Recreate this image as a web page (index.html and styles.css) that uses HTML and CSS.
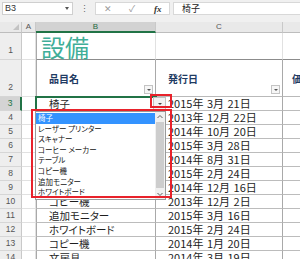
FILE: index.html
```html
<!DOCTYPE html>
<html lang="ja">
<head>
  <meta charset="UTF-8" />
  <title>設備</title>
  <link rel="stylesheet" href="styles.css">
</head>
<body>

  <div class="formula-bar">
    <div class="name-box">B3<span class="caret"></span></div>
    <div class="grip">⋮</div>
    <div class="fx-tools">
      <span class="tool">✕</span>
      <span class="tool">✓</span>
      <span class="fx">fx</span>
    </div>
    <div class="formula">椅子</div>
  </div>

  <div class="sheet">
    <div class="corner"><span class="tri"></span></div>
    <div class="col-h">A</div>
    <div class="col-h sel">B</div>
    <div class="col-h">C</div>
    <div class="col-h"></div>

    <div class="row-h r1">1</div>
    <div class="cell"></div>
    <div class="cell title">設備</div>
    <div class="cell"></div>
    <div class="cell"></div>

    <div class="row-h r2">2</div>
    <div class="cell"></div>
    <div class="cell th">品目名<span class="filter"></span></div>
    <div class="cell th">発行日<span class="filter"></span></div>
    <div class="cell th last">価</div>

    <div class="row-h sel">3</div>
    <div class="cell"></div>
    <div class="cell td active">椅子</div>
    <div class="cell td date">2015年 3月 21日</div>
    <div class="cell td last"></div>

    <!-- rows 4-9: item names sit under the open list -->
    <div class="row-h">4</div>
    <div class="cell"></div>
    <div class="cell td"></div>
    <div class="cell td date">2013年 12月 22日</div>
    <div class="cell td last"></div>

    <div class="row-h">5</div>
    <div class="cell"></div>
    <div class="cell td"></div>
    <div class="cell td date">2014年 10月 20日</div>
    <div class="cell td last"></div>

    <div class="row-h">6</div>
    <div class="cell"></div>
    <div class="cell td"></div>
    <div class="cell td date">2015年 3月 28日</div>
    <div class="cell td last"></div>

    <div class="row-h">7</div>
    <div class="cell"></div>
    <div class="cell td"></div>
    <div class="cell td date">2014年 8月 31日</div>
    <div class="cell td last"></div>

    <div class="row-h">8</div>
    <div class="cell"></div>
    <div class="cell td"></div>
    <div class="cell td date">2015年 2月 24日</div>
    <div class="cell td last"></div>

    <div class="row-h">9</div>
    <div class="cell"></div>
    <div class="cell td"></div>
    <div class="cell td date">2014年 12月 16日</div>
    <div class="cell td last"></div>

    <div class="row-h">10</div>
    <div class="cell"></div>
    <div class="cell td">コピー機</div>
    <div class="cell td date">2013年 12月 2日</div>
    <div class="cell td last"></div>

    <div class="row-h">11</div>
    <div class="cell"></div>
    <div class="cell td">追加モニター</div>
    <div class="cell td date">2015年 3月 16日</div>
    <div class="cell td last"></div>

    <div class="row-h">12</div>
    <div class="cell"></div>
    <div class="cell td">ホワイトボード</div>
    <div class="cell td date">2015年 2月 24日</div>
    <div class="cell td last"></div>

    <div class="row-h">13</div>
    <div class="cell"></div>
    <div class="cell td">コピー機</div>
    <div class="cell td date">2014年 1月 20日</div>
    <div class="cell td last"></div>

    <div class="row-h">14</div>
    <div class="cell"></div>
    <div class="cell td">文房具</div>
    <div class="cell td date">2014年 3月 19日</div>
    <div class="cell td last"></div>

    <!-- validation dropdown -->
    <span class="dv-btn"></span>
    <div class="dv-list">
      <ul>
        <li class="on">椅子</li>
        <li>レーザー プリンター</li>
        <li>スキャナー</li>
        <li>コーヒー メーカー</li>
        <li>テーブル</li>
        <li>コピー機</li>
        <li>追加モニター</li>
        <li>ホワイトボード</li>
      </ul>
      <div class="scroll">
        <svg class="arrow" width="10" height="8" viewBox="0 0 10 8"><polyline points="2.5,5.5 5,3 7.5,5.5" fill="none" stroke="#606060" stroke-width="1"/></svg>
        <div class="thumb"></div>
        <svg class="arrow" width="10" height="8" viewBox="0 0 10 8"><polyline points="2.5,2.5 5,5 7.5,2.5" fill="none" stroke="#606060" stroke-width="1"/></svg>
      </div>
    </div>

    <!-- annotation boxes -->
    <div class="mark mark-btn"></div>
    <div class="mark mark-list"></div>
  </div>

</body>
</html>
```

FILE: styles.css
```css
body {
  margin: 0;
  width: 300px;
  height: 259px;
  overflow: hidden;
  background-color: #f0f0f0;
  font-family: "Noto Sans CJK JP", "Noto Sans", sans-serif;
  font-feature-settings: "palt";
  color: #222;
}

/* formula bar */
.formula-bar {
  display: flex;
  align-items: center;
  height: 17px;
  padding: 0 0 0 2px;
  margin-bottom: 5px;
}

.name-box {
  position: relative;
  width: 71px;
  height: 13px;
  box-sizing: border-box;
  background-color: #fff;
  border: 1px solid #cfcfcf;
  font-family: "Liberation Sans", sans-serif;
  font-size: 9px;
  line-height: 11px;
  padding-left: 2px;
  color: #333;
}

.caret {
  position: absolute;
  right: 3px;
  top: 4px;
  border-left: 2px solid transparent;
  border-right: 2px solid transparent;
  border-top: 3px solid #555;
}

.grip {
  width: 22px;
  text-align: center;
  font-size: 9px;
  color: #666;
}

.fx-tools {
  display: flex;
  align-items: center;
  width: 75px;
  height: 13px;
  box-sizing: border-box;
  background-color: #fff;
  border: 1px solid #d8d8d8;
  padding-left: 8px;
  font-size: 9px;
}

.tool {
  width: 25px;
  color: #9a9a9a;
}

.fx {
  font-family: "Liberation Serif", serif;
  font-style: italic;
  font-weight: bold;
  color: #333;
  font-size: 9px;
}

.formula {
  flex: 1;
  height: 13px;
  box-sizing: border-box;
  margin-left: 3px;
  background-color: #fff;
  border: 1px solid #d8d8d8;
  border-right: none;
  padding-left: 8px;
  font-size: 9px;
  line-height: 11px;
}

/* sheet grid */
.sheet {
  position: relative;
  display: grid;
  grid-template-columns: 22px 14px 120px 127px 1fr;
  grid-template-rows: 11px 27px 37px;
  grid-auto-rows: 14px;
  background-color: #fff;
}

.sheet > div {
  box-sizing: border-box;
}

.corner, .col-h {
  background-color: #e9e9e9;
  border-right: 1px solid #c9c9c9;
  border-bottom: 1px solid #bdbdbd;
  font-family: "Liberation Sans", sans-serif;
  font-size: 8px;
  line-height: 10px;
  text-align: center;
  color: #555;
}

.corner {
  position: relative;
}

.tri {
  position: absolute;
  right: 2px;
  bottom: 2px;
  border-left: 6px solid transparent;
  border-bottom: 6px solid #c3c3c3;
}

.col-h.sel {
  background-color: #d2d2d2;
  border-bottom: 2px solid #217346;
  color: #1f6b42;
}

.row-h {
  display: flex;
  align-items: flex-end;
  justify-content: center;
  background-color: #eeeeee;
  border-right: 1px solid #c9c9c9;
  border-bottom: 1px solid #d6d6d6;
  font-family: "Liberation Sans", sans-serif;
  font-size: 8.5px;
  line-height: 13px;
  color: #555;
}

.row-h.r1 {
  padding-bottom: 2px;
}

.row-h.r2 {
  padding-bottom: 2px;
}

.row-h.sel {
  background-color: #d4d4d4;
  border-right: 2px solid #217346;
  color: #217346;
}

.cell {
  position: relative;
  border-right: 1px solid #e1e1e1;
  border-bottom: 1px solid #e1e1e1;
  font-size: 10.5px;
  line-height: 13px;
  white-space: nowrap;
}

.title {
  font-size: 24px;
  line-height: 27px;
  padding-left: 4px;
  color: #3fae98;
  font-feature-settings: normal;
  border-bottom-color: #8c8c8c;
}

.sheet > .title + .cell,
.sheet > .title + .cell + .cell {
  border-bottom-color: #8c8c8c;
}

.th {
  display: flex;
  align-items: center;
  padding-left: 12px;
  font-size: 10px;
  font-weight: bold;
  color: #1f3b63;
  font-feature-settings: normal;
  border-right: 1px solid #a9a9a9;
  border-bottom: 1px solid #b9b9b9;
}

.th.last {
  padding-left: 9px;
}

.filter {
  position: absolute;
  right: 2px;
  bottom: 2px;
  width: 9px;
  height: 9px;
  box-sizing: border-box;
  background-color: #f6f6f6;
  border: 1px solid #c4c4c4;
}

.filter::after {
  content: "";
  position: absolute;
  left: 2px;
  top: 3px;
  border-left: 2px solid transparent;
  border-right: 2px solid transparent;
  border-top: 2px solid #555;
}

.td {
  padding-left: 12px;
  border-right: 1px solid #a9a9a9;
  border-bottom: 1px solid #bcbcbc;
  color: #1e1e1e;
}

.td.date {
  font-size: 11px;
  word-spacing: 1px;
}

.sheet > .cell:nth-child(5n+3) {
  border-left: 1px solid #a9a9a9;
}

.sheet > .title {
  border-left: none;
}

.td.last, .th.last {
  border-right: none;
}

.td.active {
  outline: 2px solid #217346;
  outline-offset: -1px;
}

/* validation dropdown */
.dv-btn {
  position: absolute;
  left: 153px;
  top: 75px;
  width: 13px;
  height: 13px;
  box-sizing: border-box;
  background-color: #f2f2f2;
  border: 1px solid #c2c2c2;
  z-index: 2;
}

.dv-btn::after {
  content: "";
  position: absolute;
  left: 4px;
  top: 5px;
  border-left: 2px solid transparent;
  border-right: 2px solid transparent;
  border-top: 2px solid #444;
}

.dv-list {
  position: absolute;
  left: 35px;
  top: 89px;
  width: 131px;
  height: 89px;
  box-sizing: border-box;
  display: flex;
  background-color: #fff;
  border: 1px solid #9a9a9a;
  z-index: 2;
}

.dv-list ul {
  flex: 1;
  list-style: none;
  margin: 0;
  padding: 1px 0 0 0;
}

.dv-list li {
  height: 10.6px;
  padding-left: 2px;
  font-size: 7.5px;
  line-height: 10.6px;
  white-space: nowrap;
  color: #111;
}

.dv-list li.on {
  background-color: #3393ff;
  color: #fff;
}

.scroll {
  display: flex;
  flex-direction: column;
  width: 10px;
  background-color: #f0f0f0;
}

.arrow {
  display: block;
  height: 9px;
}

.thumb {
  flex: 1;
  margin: 1px 1px 2px;
  background-color: #cdcdcd;
}

/* red annotation boxes */
.mark {
  position: absolute;
  border: 2px solid #e8222b;
  z-index: 3;
}

.mark-btn {
  left: 150px;
  top: 72px;
  width: 22px;
  height: 14px;
}

.mark-list {
  left: 31px;
  top: 87px;
  width: 141px;
  height: 89px;
}
```
